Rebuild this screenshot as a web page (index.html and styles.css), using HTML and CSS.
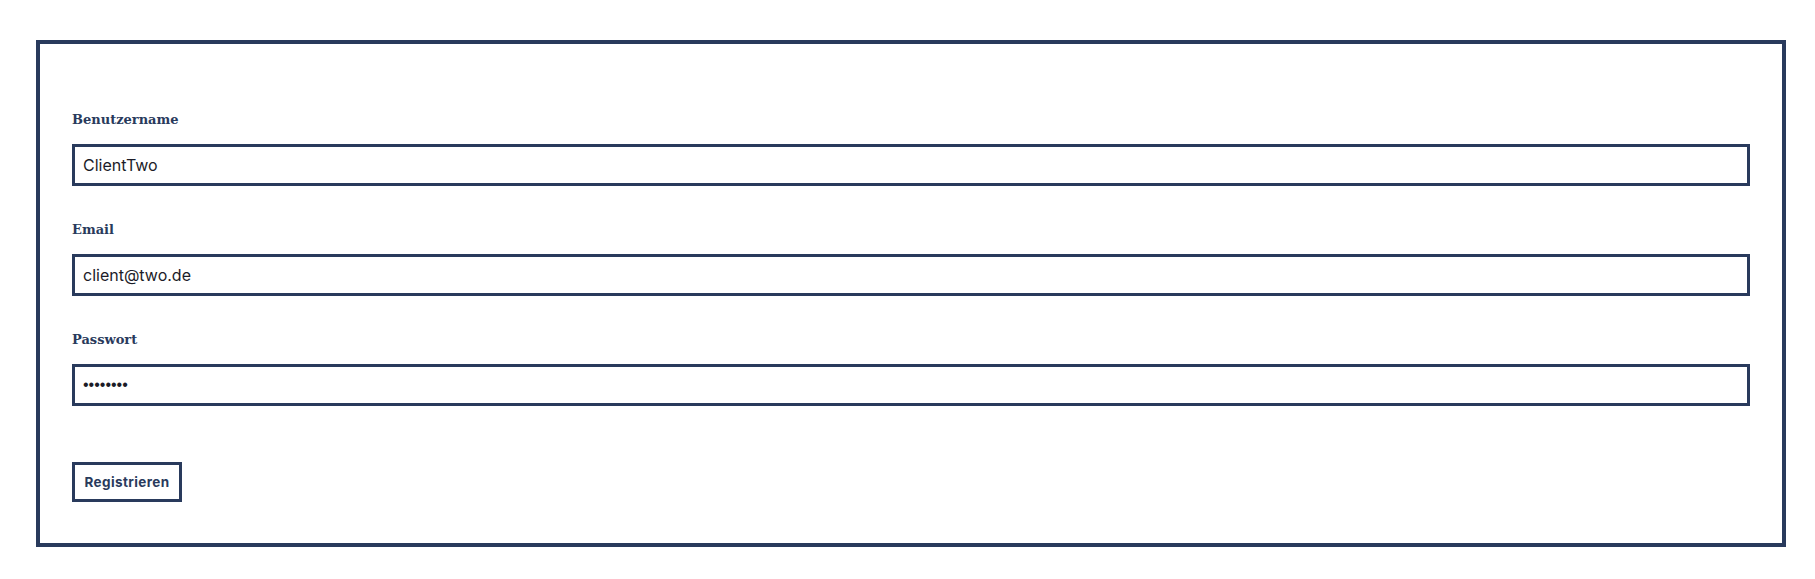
FILE: index.html
```html
<!DOCTYPE html>
<html lang="de">
<head>
<meta charset="utf-8">
<title>Registrieren</title>
<link rel="stylesheet" href="styles.css">
</head>
<body>
<form class="panel">
  <div class="field">
    <label class="label" for="u">Benutzername</label>
    <input class="input" id="u" type="text" value="ClientTwo">
  </div>
  <div class="field">
    <label class="label" for="e">Email</label>
    <input class="input" id="e" type="text" value="client@two.de">
  </div>
  <div class="field">
    <label class="label" for="p">Passwort</label>
    <input class="input input-secret" id="p" type="password" value="abcdefgh">
  </div>
  <div class="actions">
    <button class="button" type="button">Registrieren</button>
  </div>
</form>
</body>
</html>
```

FILE: styles.css
```css
html, body {
  margin: 0;
  background: #ffffff;
}
body {
  padding: 40px 29px 0 36px;
}
.panel {
  border: 4px solid #293a5c;
  padding: 66px 32px 41px 32px;
  display: flex;
  flex-direction: column;
  gap: 34px;
}
.field {
  display: flex;
  flex-direction: column;
  gap: 14px;
}
.label {
  font-family: "DejaVu Serif", serif;
  font-weight: bold;
  font-size: 13px;
  line-height: 20px;
  color: #293a5c;
}
.input {
  box-sizing: border-box;
  height: 42px;
  width: 100%;
  margin: 0;
  border: 3px solid #293a5c;
  border-radius: 0;
  padding: 0 8px;
  font-family: "Inter", "Noto Sans", sans-serif;
  font-size: 16px;
  color: #1c1c28;
  outline: none;
}
.input-secret {
  font-family: "Liberation Sans", sans-serif;
  font-size: 16px;
}
.actions {
  padding-top: 22px;
}
.button {
  box-sizing: border-box;
  width: 110px;
  height: 40px;
  border: 3px solid #293a5c;
  border-radius: 0;
  background: #ffffff;
  font-family: "Inter", "Noto Sans", sans-serif;
  font-weight: 700;
  font-size: 13.5px;
  letter-spacing: 0.4px;
  color: #293a5c;
  padding: 0;
}
```
